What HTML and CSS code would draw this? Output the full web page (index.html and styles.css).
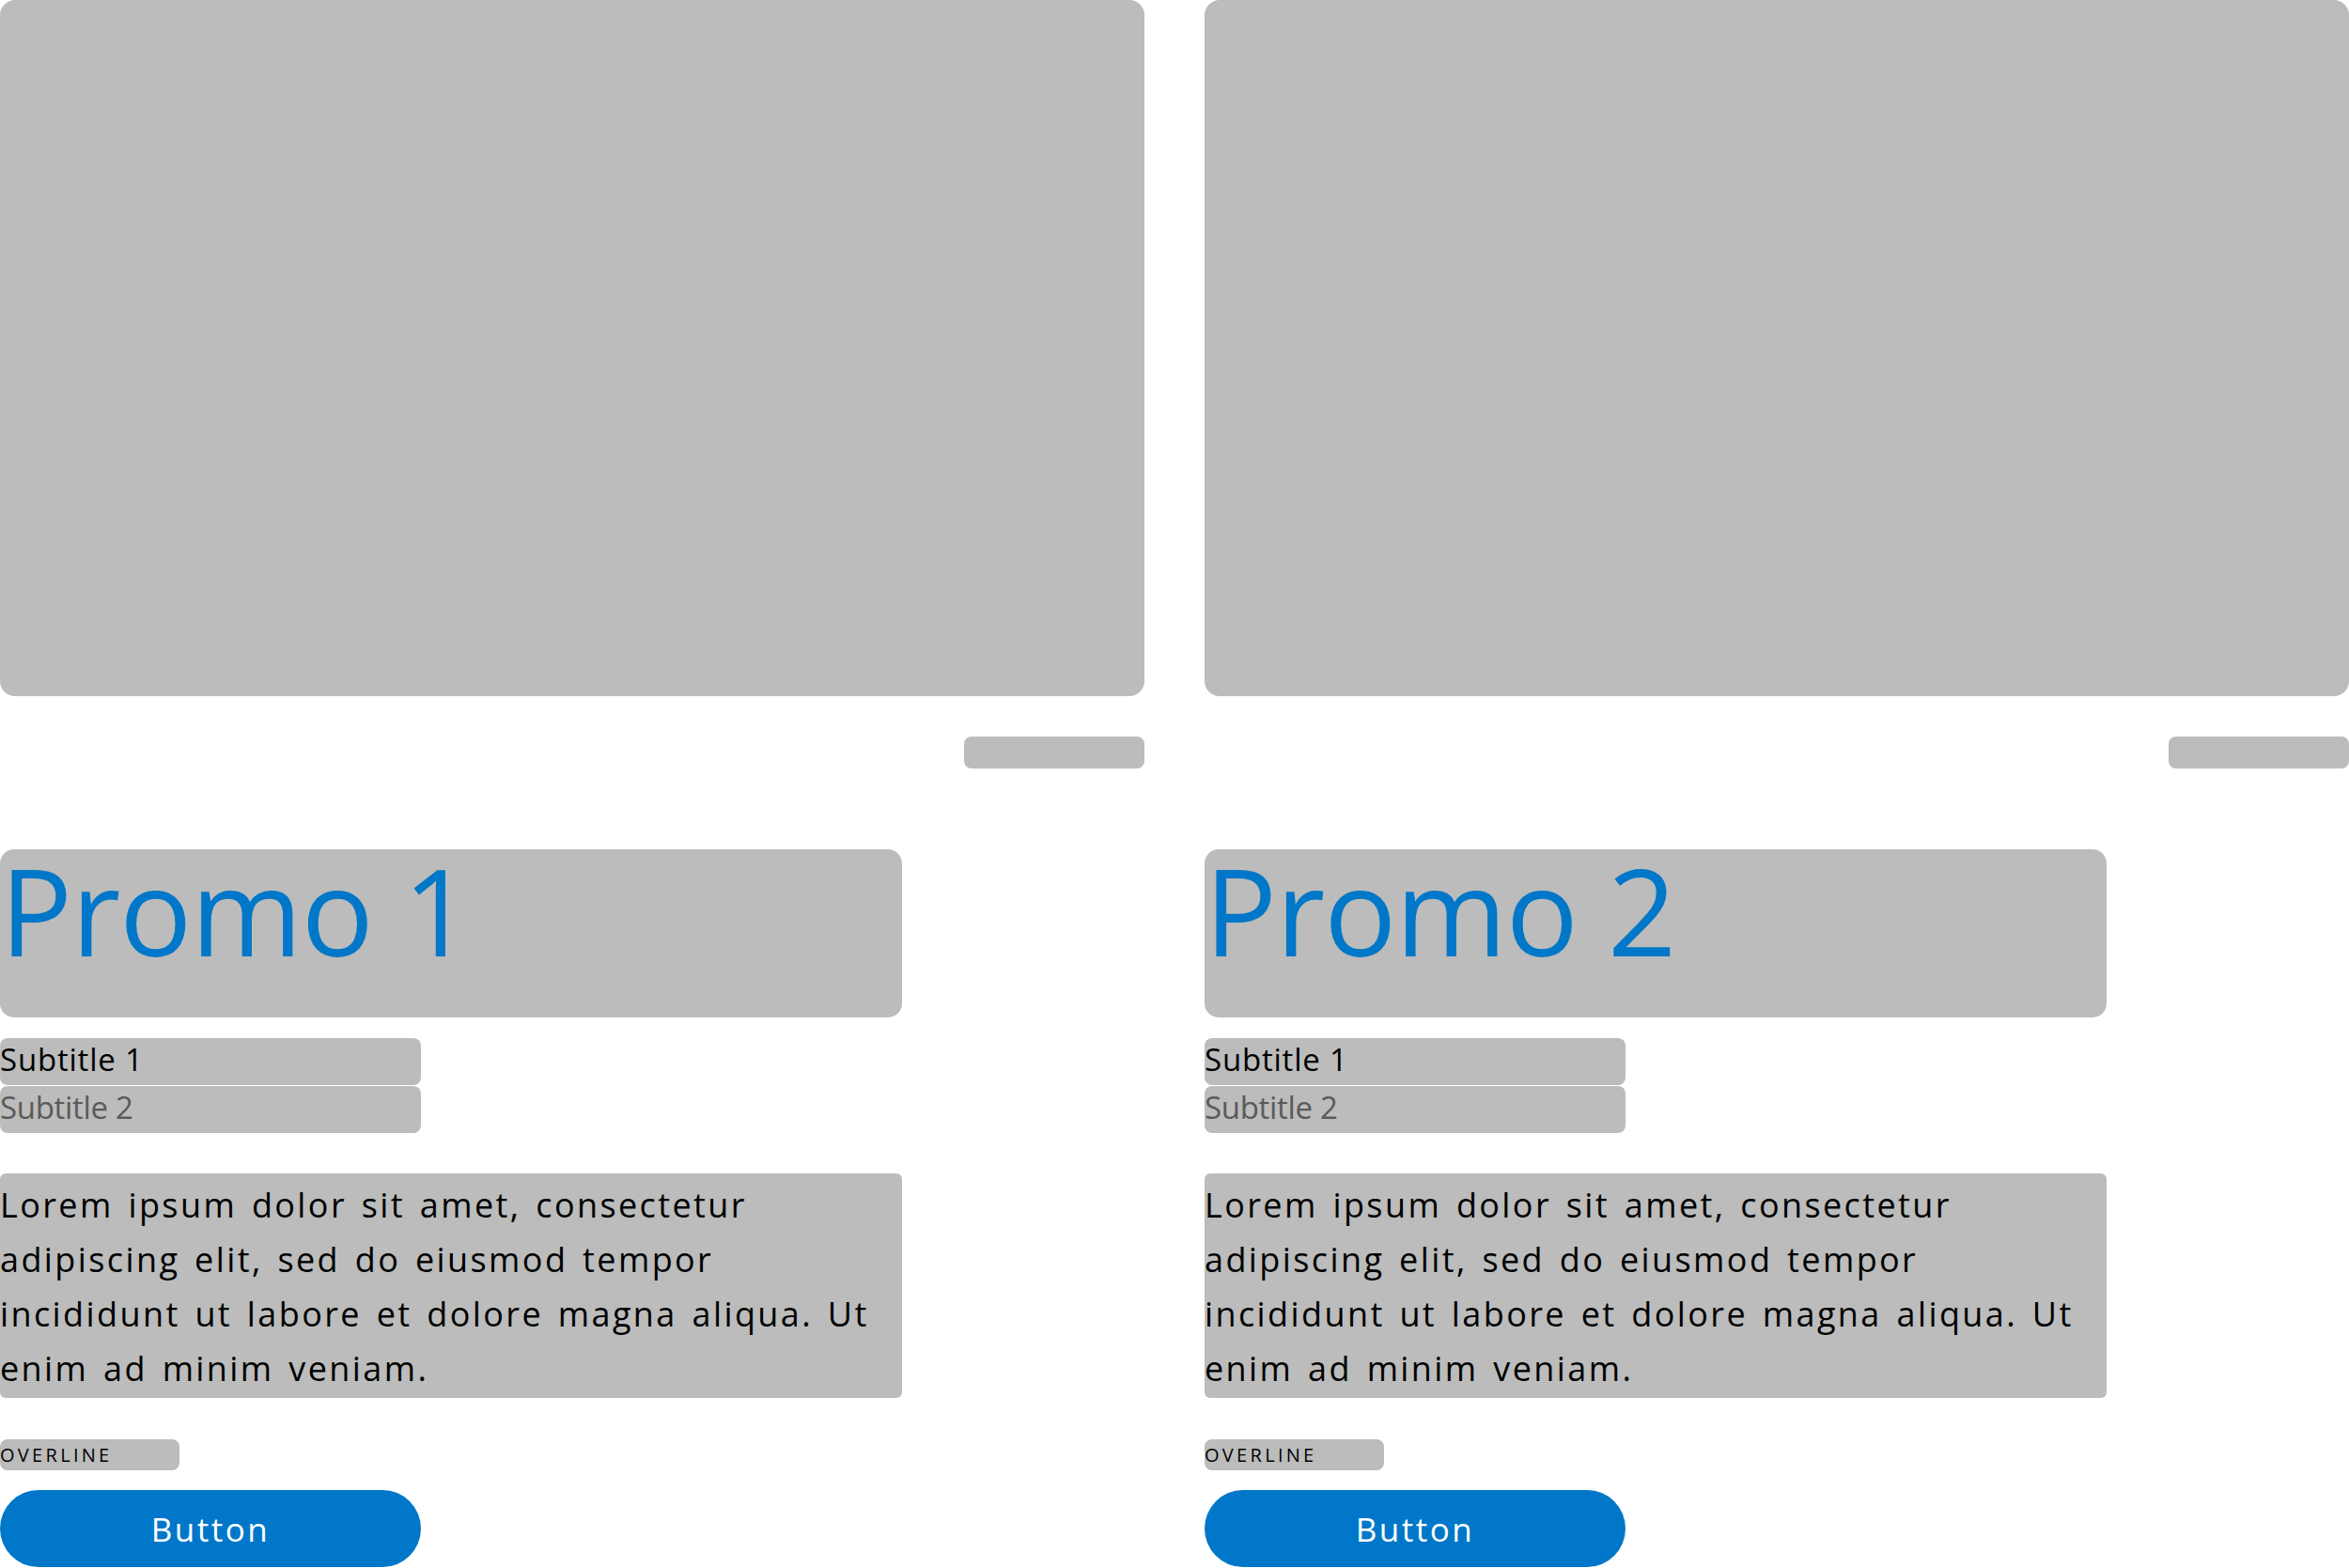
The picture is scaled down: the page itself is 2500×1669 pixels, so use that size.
FILE: index.html
```html
<!DOCTYPE html>
<html lang="en">
<head>
    <meta charset="UTF-8">
    <meta name="viewport" content="width=device-width, initial-scale=1.0">
    <title>Promos</title>
    <link rel="stylesheet" href="styles.css">
</head>
<body>

<div class="promos">
    <!-- Promo 1 -->
    <div class="promo">
        <div class="promo-image"></div>
        <div class="promo-caption"></div>
        <h1 class="promo-title">Promo 1</h1>
        <div class="subtitles">
            <p class="subtitle subtitle-1">Subtitle 1</p>
            <p class="subtitle subtitle-2">Subtitle 2</p>
        </div>
        <p class="promo-body">Lorem ipsum dolor sit amet, consectetur<br>
            adipiscing elit, sed do eiusmod tempor<br>
            incididunt ut labore et dolore magna aliqua. Ut<br>
            enim ad minim veniam.</p>
        <p class="overline">OVERLINE</p>
        <button class="promo-button">Button</button>
    </div>

    <!-- Promo 2 -->
    <div class="promo">
        <div class="promo-image"></div>
        <div class="promo-caption"></div>
        <h1 class="promo-title">Promo 2</h1>
        <div class="subtitles">
            <p class="subtitle subtitle-1">Subtitle 1</p>
            <p class="subtitle subtitle-2">Subtitle 2</p>
        </div>
        <p class="promo-body">Lorem ipsum dolor sit amet, consectetur<br>
            adipiscing elit, sed do eiusmod tempor<br>
            incididunt ut labore et dolore magna aliqua. Ut<br>
            enim ad minim veniam.</p>
        <p class="overline">OVERLINE</p>
        <button class="promo-button">Button</button>
    </div>
</div>

</body>
</html>
```
FILE: styles.css
```css
body {
    font-family: "Open Sans", "Noto Sans", sans-serif;
    margin: 0;
    padding: 0;
    background-color: #fff;
    color: #000;
}
.promos {
    display: grid;
    grid-template-columns: 1fr 1fr;
    column-gap: 64px;
}
.promo {
    display: flex;
    flex-direction: column;
    align-items: flex-start;
}
.promo-image {
    width: 100%;
    height: 741px;
    background-color: #bbbcbb;
    border-radius: 16px;
}
.promo-caption {
    align-self: flex-end;
    width: 192px;
    height: 34px;
    margin-top: 43px;
    background-color: #bbbcbb;
    border-radius: 8px;
}
.promo-title {
    width: 960px;
    height: 179px;
    margin: 86px 0 0;
    font-size: 128px;
    font-weight: 400;
    line-height: 130px;
    letter-spacing: -1px;
    color: #0077c8;
    background-color: #bbbcbb;
    border-radius: 15px;
}
.subtitles {
    display: flex;
    flex-direction: column;
    gap: 1px;
    margin-top: 22px;
}
.subtitle {
    width: 448px;
    height: 50px;
    margin: 0;
    font-size: 33px;
    line-height: 46px;
    background-color: #bbbcbb;
    border-radius: 8px;
}
.subtitle-1 {
    letter-spacing: 0.8px;
}
.subtitle-2 {
    color: #5a5a5a;
    letter-spacing: -0.3px;
}
.promo-body {
    box-sizing: border-box;
    width: 960px;
    height: 239px;
    margin: 43px 0 0;
    padding-top: 5px;
    font-size: 36px;
    line-height: 58px;
    letter-spacing: 2.4px;
    word-spacing: 4px;
    white-space: nowrap;
    background-color: #bbbcbb;
    border-radius: 6px;
}
.overline {
    width: 191px;
    height: 33px;
    margin: 44px 0 0;
    font-size: 20px;
    line-height: 33px;
    letter-spacing: 3.3px;
    background-color: #bbbcbb;
    border-radius: 8px;
}
.promo-button {
    width: 448px;
    height: 82px;
    margin-top: 21px;
    padding: 0;
    font-family: inherit;
    font-size: 35px;
    letter-spacing: 2.5px;
    color: #fff;
    background-color: #0077c8;
    border: none;
    border-radius: 41px;
    cursor: pointer;
}
```
